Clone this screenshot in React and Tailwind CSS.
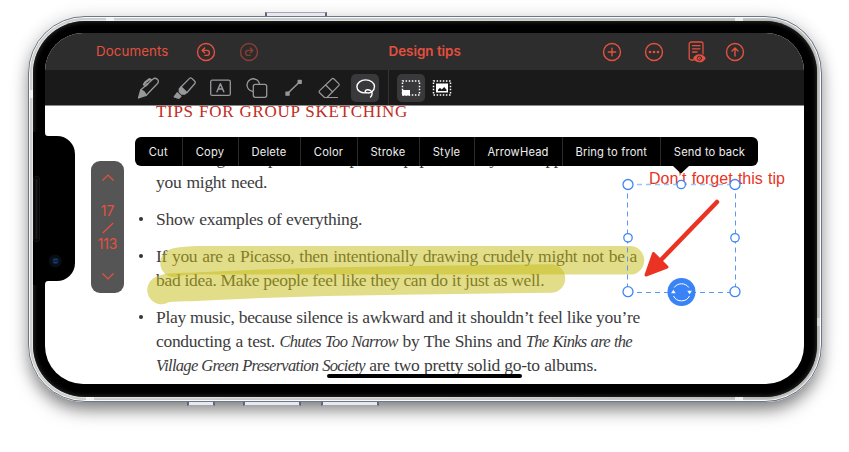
import React from "react";

const menuItems = [
  ["Cut", "w-[46.5px]"],
  ["Copy", "w-[56px]"],
  ["Delete", "w-[62px]"],
  ["Color", "w-[57px]"],
  ["Stroke", "w-[62px]"],
  ["Style", "w-[55px]"],
  ["ArrowHead", "w-[88px]"],
  ["Bring to front", "w-[98.5px]"],
  ["Send to back", "w-[98px]"],
];

function CircleIcon({ children, className = "" }) {
  return (
    <svg viewBox="0 0 20 20" className={`h-5 w-5 shrink-0 fill-none stroke-[#e5503f] stroke-[1.4] ${className}`} strokeLinecap="round" strokeLinejoin="round">
      <circle cx="10" cy="10" r="8.5" />
      {children}
    </svg>
  );
}

function Header() {
  return (
    <header className="flex h-[37px] shrink-0 items-center bg-[#2d2d2d] font-[Inter,sans-serif] text-[#e5503f]">
      <div className="ml-[51px] w-[101px] text-[13.3px] tracking-[0.1px]">Documents</div>
      <CircleIcon className="-ml-[1px]">
        <path d="M6.3 8.4h4.6a2.5 2.5 0 0 1 0 5H9M8.6 5.9 6.2 8.4l2.4 2.4" />
      </CircleIcon>
      <CircleIcon className="ml-[22.5px] opacity-50">
        <path d="M13.7 8.4H9.1a2.5 2.5 0 0 0 0 5H11M11.4 5.9l2.4 2.5-2.4 2.4" />
      </CircleIcon>
      <div className="ml-[130px] w-[213px] text-[13.4px] font-semibold">Design tips</div>
      <CircleIcon>
        <path d="M10 6.3v7.4M6.3 10h7.4" />
      </CircleIcon>
      <CircleIcon className="ml-[22.5px]">
        <g className="fill-[#e5503f] stroke-none">
          <circle cx="6" cy="10" r="1.35" />
          <circle cx="10" cy="10" r="1.35" />
          <circle cx="14" cy="10" r="1.35" />
        </g>
      </CircleIcon>
      <svg viewBox="0 0 20 22" className="ml-[22.5px] h-[22px] w-5 fill-none stroke-[#e5503f] stroke-[1.3]" strokeLinecap="round">
        <path d="M7 19H4.2A2 2 0 0 1 2.200 17V3a2 2 0 0 1 2-2H14a2 2 0 0 1 2 2v10" />
        <path d="M5.500 4.700h7.500M5.500 7.800h7.500M5.500 11h4.500" />
        <path d="M6.800 17.300c2.500-4.400 8.500-4.400 11.200 0-2.700 4.400-8.700 4.400-11.200 0z" className="fill-[#e5503f]" />
        <circle cx="12.400" cy="17.300" r="2.100" className="fill-[#e5503f] stroke-[#2d2d2d] stroke-[0.9]" />
        <circle cx="12.400" cy="17.300" r="0.500" className="fill-[#2d2d2d] stroke-none" />
      </svg>
      <CircleIcon className="ml-[18px]">
        <path d="M10 14V6.200M7 9.100l3-3 3 3" />
      </CircleIcon>
    </header>
  );
}

function Tool({ children }) {
  return (
    <div className="flex w-[36.200px] shrink-0 items-center justify-center">
      <svg viewBox="0 0 24 24" className="h-6 w-6 fill-none stroke-[#98989b] stroke-[1.3]" strokeLinecap="round" strokeLinejoin="round">
        {children}
      </svg>
    </div>
  );
}

function Toolbar() {
  return (
    <div className="flex h-9 shrink-0 items-center border-b border-[#8a8a8a] bg-[#1a1a1a] pl-[85px]">
      <Tool>
        <path d="M4.700 14 16.800 3.200c3-2.500 7.300 1.300 4.700 4.300L10 19.500" />
        <path d="M8 8.500 9 6.700l4.500-3.500 1.300.5" className="stroke-[2.300]" />
        <path d="m9.500 9.800 2-1.800" className="stroke-[2]" />
        <path d="M4.700 14.200c2.300.5 4.500 2.500 5.300 5.100L2.500 22z" className="fill-[#98989b]" />
      </Tool>
      <Tool>
        <path d="m9 11 8.500-8.600c.700-.700 1.700-.600 2.400 0l2.800 2.800c.7.7.700 1.700 0 2.600L15 16.500" />
        <path d="m9 10.800 5.800 5.700-2.300 1.700H9.800L7.300 15.700v-2.900z" className="fill-[#98989b]" />
        <path d="m5.200 16.800 3.700 3.500-2 2-4.700-1.500z" className="fill-[#98989b]" />
      </Tool>
      <Tool>
        <rect x="2.700" y="4.200" width="19.600" height="15.200" rx="1.500" />
        <path d="M9 15.800 12.400 7.700 15.800 15.800M10.200 13h4.400" className="stroke-[1.500]" />
      </Tool>
      <Tool>
        <path d="M7.500 15.300A6.300 6.300 0 1 1 14.500 8" />
        <rect x="8.300" y="8.300" width="13.400" height="13" rx="2" />
      </Tool>
      <Tool>
        <path d="M6.500 17.500 18.500 6" className="stroke-[1.500]" />
        <rect x="5" y="16.200" width="3" height="3" className="fill-[#98989b]" />
        <rect x="17.200" y="4.300" width="3" height="3" className="fill-[#98989b]" />
      </Tool>
      <Tool>
        <path d="M20.500 21.500H7.500L2.600 16.700c-.700-.700-.700-1.300 0-2L14.800 3c.700-.700 1.500-.700 2.200 0l4.700 4.600c.7.7.700 1.400 0 2.100L10 21.500M8.700 9l7 7" className="stroke-[1.200]" />
      </Tool>
      <div className="ml-1 flex h-7 w-7 shrink-0 items-center justify-center rounded-[5px] bg-[#39393b]">
        <svg viewBox="0 0 24 24" className="ml-px h-6 w-6 fill-none stroke-white stroke-[1.400]" strokeLinecap="round">
          <path d="M12.500 16.700C6.500 17.500 2.900 14.300 2.900 10.800c0-4 4-6.900 8.700-6.900s8.900 2.700 8.900 6.700c0 4.200-4 7.400-8 6.100-2.300-.8-1.300-3 1-2.900 2.600.1 4.700 1.200 4.600 3.500 0 1.800-1 3.200-1.600 3.700" />
        </svg>
      </div>
      <div className="mx-[8.500px] h-full w-px bg-[#333]" />
      <div className="flex h-7 w-7 shrink-0 items-center justify-center rounded-[5px] bg-[#39393b]">
        <svg viewBox="0 0 20 18" className="h-[18px] w-5 fill-none stroke-white">
          <rect x="1.500" y="2" width="17" height="14" strokeDasharray="1.500 1.600" className="stroke-[1.500]" />
          <rect x="1" y="11" width="8" height="5.500" className="fill-white stroke-none" />
        </svg>
      </div>
      <svg viewBox="0 0 20 18" className="ml-[7px] h-[18px] w-5 fill-none stroke-white">
        <rect x="1.500" y="2" width="17" height="14" strokeDasharray="1.500 1.600" className="stroke-[1.500]" />
        <rect x="4" y="4.500" width="12" height="9" className="fill-white stroke-none" />
        <path d="M6 12v-1.300l2-1.900 1.700 1.600 2.500-2.400 2.300 2.700V12z" className="fill-[#1a1a1a] stroke-none" />
      </svg>
    </div>
  );
}

function Line({ children, width }) {
  return <div className={`h-6 whitespace-nowrap [text-align-last:justify] ${width}`}>{children}</div>;
}

function Title({ children }) {
  return <i className="text-[16.500px] leading-none tracking-[-0.700px]">{children}</i>;
}

function Bullet({ children, dot = true }) {
  return (
    <li className="flex">
      <span className="w-[17px] shrink-0 pt-[10px]">
        {dot && <span className="block h-1 w-1 rounded-full bg-[#333]" />}
      </span>
      <div>{children}</div>
    </li>
  );
}

function Document() {
  return (
    <main className="pl-[94px] font-['Liberation_Serif',serif] text-[17.500px] leading-6 tracking-[-0.300px] text-[#3c3c3c]">
      <h1 className="ml-[17px] w-[252px] whitespace-nowrap text-[17px] leading-[12px] tracking-[0.700px] text-[#bf2c24] [text-align-last:justify]">
        TIPS FOR GROUP SKETCHING
      </h1>
      <ul className="mt-[28px] space-y-[13px]">
        <Bullet dot={false}>
          <Line width="w-[462px]">Have large sharpies and a pile of paper, or any art supplies that</Line>
          <Line width="w-[111px]">you might need.</Line>
        </Bullet>
        <Bullet>
          <Line width="w-[206px]">Show examples of everything.</Line>
        </Bullet>
        <Bullet>
          <Line width="w-[481px]">If you are a Picasso, then intentionally drawing crudely might not be a</Line>
          <Line width="w-[388px]">bad idea. Make people feel like they can do it just as well.</Line>
        </Bullet>
        <Bullet>
          <Line width="w-[484px]">Play music, because silence is awkward and it shouldn’t feel like you’re</Line>
          <Line width="w-[476px]">
            conducting a test. <Title>Chutes Too Narrow</Title> by The Shins and <Title>The Kinks are the</Title>
          </Line>
          <Line width="w-[441px]">
            <Title>Village Green Preservation Society</Title> are two pretty solid go-to albums.
          </Line>
        </Bullet>
      </ul>
    </main>
  );
}

function Annotations() {
  return (
    <>
      <svg viewBox="45 33 759 351" className="absolute inset-0 h-full w-full fill-none" strokeLinecap="round" strokeLinejoin="round">
        <g className="stroke-[#c5bb13]">
          <path d="M174.500 263C180 260.500 190 260.500 200 260.300H630" strokeOpacity="0.500" strokeWidth="28.500" />
          <path d="M161.500 290C168 286.500 180 287.500 200 286.500Q300 281.500 400 280.500T551 278.500" strokeOpacity="0.500" strokeWidth="28.500" />
        </g>
      </svg>
      <div className="absolute left-[604px] top-[137px] w-[136px] whitespace-nowrap font-['Liberation_Sans',sans-serif] text-[16px] leading-[18px] text-[#ea3323] [text-align-last:justify]">
        Don’t forget this tip
      </div>
      <svg viewBox="45 33 759 351" className="absolute inset-0 h-full w-full fill-none" strokeLinejoin="round">
        <path d="M717 202 660 261" className="stroke-[#ea3323] stroke-[4.500]" strokeLinecap="round" />
        <path d="M646 275 653.500 253.500 667 267z" className="fill-[#ea3323] stroke-[#ea3323] stroke-[3]" />
        <path d="M628 184.500H736" strokeDasharray="5 4" className="stroke-[#9fc3f8] stroke-[1.500]" />
        <path d="M627.500 184.500V292.500M735.500 184.500V292.500M628 292.500H736" strokeDasharray="5 4" className="stroke-[#5a97f5] stroke-1" />
        <g className="fill-white stroke-[#3f86f5] stroke-[1.300]">
          <circle cx="628" cy="184.500" r="5" />
          <circle cx="735" cy="184.500" r="5" />
          <circle cx="628" cy="291.700" r="5" />
          <circle cx="735" cy="291.700" r="5" />
          <circle cx="681.200" cy="184.500" r="4.200" />
          <circle cx="628" cy="237.800" r="4.200" />
          <circle cx="735" cy="237.800" r="4.200" />
        </g>
        <circle cx="681.500" cy="292" r="14" className="fill-[#3a83f7]" />
        <path d="M674.200 287.500a9 9 0 0 1 14.600 0M689.500 296a9 9 0 0 1-16 0" className="stroke-white stroke-1" />
        <path d="m673.400 289.700 2.300 3.500h-4.600zM689.600 294.300l2.300-3.500h-4.600z" className="fill-white" />
      </svg>
    </>
  );
}

function ContextMenu() {
  return (
    <div className="absolute left-[90px] top-[104px] flex h-[29px] w-[623px] rounded-md bg-black font-[Inter,sans-serif] text-[11.200px] tracking-[0.150px] text-[#eee]">
      {menuItems.map(([label, width], i) => (
        <div key={label} className={`flex shrink-0 items-center justify-center pt-px ${width} ${i ? "border-l border-[#2a2a2a]" : ""}`}>
          {label}
        </div>
      ))}
      <svg viewBox="0 0 16 8" className="absolute left-[538px] top-[28.500px] h-2 w-4">
        <path d="M0 0h16L8 7.500z" />
      </svg>
    </div>
  );
}

function PageStepper() {
  return (
    <div className="absolute left-[46px] top-[128px] flex h-[132px] w-[33px] flex-col items-center justify-between rounded-[9px] bg-[#555] py-[13px] font-[Inter,sans-serif] text-[13.800px] text-[#e9503f]">
      <svg viewBox="0 0 12 7" className="h-[7px] w-3 fill-none stroke-current stroke-[1.200]">
        <path d="M.5 6.500 6 1l5.500 5.500" />
      </svg>
      <div className="flex flex-col items-center pt-px leading-[16.500px]">
        <span>17</span>
        <svg viewBox="0 0 12 16" className="h-4 w-3 stroke-current stroke-[1.200]">
          <path d="m.8 13 10.400-10" />
        </svg>
        <span>113</span>
      </div>
      <svg viewBox="0 0 12 7" className="h-[7px] w-3 fill-none stroke-current stroke-[1.200]">
        <path d="M.5.5 6 6 11.500.5" />
      </svg>
    </div>
  );
}

function Notch() {
  return (
    <svg viewBox="33 130 44 158" className="absolute left-0 top-[109px] h-[158px] w-11">
      <path d="M33 132H45c0 3 1 4 3 4h9a18 18 0 0 1 18 18V263a18 18 0 0 1-18 18h-9c-2 0-3 1-3 4H33z" />
      <rect x="33.500" y="176.500" width="6" height="65" rx="2.500" className="fill-[#070707] stroke-[#141414]" />
      <path d="M36.500 179v60" className="stroke-[#1d1d1d] stroke-2" />
      <circle cx="55.200" cy="261" r="6.500" className="fill-[#0a0d12]" />
      <circle cx="55.500" cy="261" r="3.200" className="fill-[#0d2444]" />
      <path d="M53.500 259.500h4M53.500 262.500h4" className="stroke-[#153c70] stroke-[1.200]" />
    </svg>
  );
}

function SideButton({ className }) {
  return <div className={`absolute h-[5px] border-x-2 border-y border-x-[#5d6780] border-y-[#a9a3ab] bg-[#e9e8ee] ${className}`} />;
}

export default function App() {
  return (
    <div className="h-[452px] w-[849px] overflow-hidden bg-white pl-[28px] pt-[16px]">
      <div className="relative h-[386px] w-[794px] rounded-[57px] shadow-[0_10px_18px_-3px_rgba(0,0,0,0.5),0_0px_18px_rgba(0,0,0,0.12)]">
        <SideButton className="-top-[4px] left-[237px] w-[62px]" />
        <SideButton className="-bottom-[4px] left-[159px] w-[28px]" />
        <SideButton className="-bottom-[4px] left-[215px] w-[58px]" />
        <SideButton className="-bottom-[4px] left-[293px] w-[58px]" />
        <div className="relative h-full w-full rounded-[57px] border border-[#6b7889] bg-[linear-gradient(90deg,#eef1f2,#e3e5e4_50%,#aaabaa)] p-[4px] shadow-[inset_0_0_1px_1px_#fff,inset_0_0_2px_3px_#c4c5c1]">
          <div className="relative h-full w-full rounded-[52px] bg-black pl-[12px] pt-[12px] shadow-[inset_0_0_4px_1px_#2a2a2a]">
            <div className="relative flex h-[351px] w-[759px] flex-col overflow-hidden rounded-[38px] bg-white">
              <Header />
              <Toolbar />
              <Document />
              <Annotations />
              <ContextMenu />
              <PageStepper />
              <div className="absolute bottom-[6px] left-[282px] h-1 w-[195px] rounded-full bg-black" />
            </div>
            <Notch />
          </div>
          <div className="absolute left-[77px] top-0 h-1 w-2 bg-white/70" />
          <div className="absolute left-[706px] top-0 h-1 w-2 bg-white/70" />
          <div className="absolute bottom-0 left-[57px] h-1 w-2 bg-white/70" />
          <div className="absolute bottom-0 left-[706px] h-1 w-2 bg-white/70" />
          <div className="absolute left-0 top-[73px] h-2 w-1 bg-white/70" />
          <div className="absolute right-0 top-[301px] h-2 w-1 bg-white/40" />
        </div>
      </div>
    </div>
  );
}
